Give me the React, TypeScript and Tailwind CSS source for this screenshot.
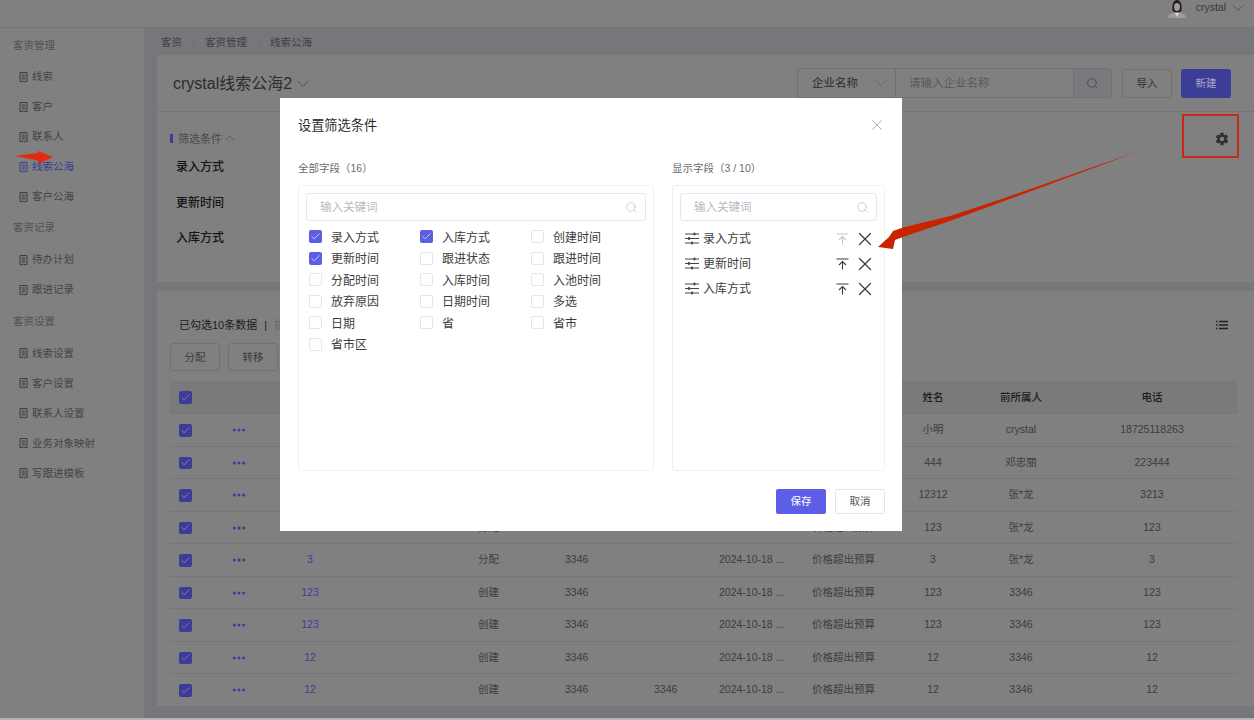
import React from "react";
import { ChevronDown, ChevronUp, ChevronRight, Search, X, Check, Ellipsis } from "lucide-react";
import { IoSettingsSharp } from "react-icons/io5";

const Doc = ({ c = "#3d3d3d" }: { c?: string }) => (
  <svg width="9" height="11" viewBox="0 0 9 11" fill="none" stroke={c} strokeWidth="1" className="shrink-0">
    <path d="M1 .5h7v9.2l-1-.6-1 .9-1.500-.9-1.500.9-1-.9-1 .6z" />
    <path d="M2.600 3h3.800M2.600 5h3.800M2.600 7h3.800" />
  </svg>
);

const Nav = ({ t, active }: { t: string; active?: boolean }) => (
  <div className={`h-[30px] flex items-center pl-[19px] gap-[4px] text-[10.5px] ${active ? "text-[#3c3c9a]" : "text-[#444444]"}`}>
    <Doc c={active ? "#3c3c9a" : "#3d3d3d"} />
    <span>{t}</span>
  </div>
);

const Group = ({ t, className = "" }: { t: string; className?: string }) => (
  <div className={`h-[30px] flex items-center pl-[13px] text-[10.5px] text-[#505050] ${className}`}>{t}</div>
);

const DarkCheck = () => (
  <span className="w-[12.5px] h-[12.5px] rounded-[2px] bg-[#3c3c96] flex items-center justify-center">
    <Check size={11} strokeWidth={1.3} className="text-[#a9a9b8]" />
  </span>
);

const rows = [
  ["", "", "", "", "小明", "crystal", "18725118263"],
  ["", "", "", "", "444", "邓忠丽", "223444"],
  ["", "", "", "", "12312", "张*龙", "3213"],
  ["123", "分配", "3346", "", "123", "张*龙", "123"],
  ["3", "分配", "3346", "", "3", "张*龙", "3"],
  ["123", "创建", "3346", "", "123", "3346", "123"],
  ["123", "创建", "3346", "", "123", "3346", "123"],
  ["12", "创建", "3346", "", "12", "3346", "12"],
  ["12", "创建", "3346", "3346", "12", "3346", "12"],
];

const cols = "grid grid-cols-[58px_22px_120px_108px_87px_89px_65px_93px_88px_66px_110px_152px_9px] items-center";

const ModalSearch = () => (
  <div className="h-[28px] rounded-[3px] border border-[#e6e8ee] flex items-center pl-[13px] pr-[7px] justify-between">
    <span className="text-[11.5px] text-[#b6bac4] mt-[2px]">输入关键词</span>
    <Search size={13} strokeWidth={1} className="text-[#a6aab2]" />
  </div>
);

const Box = ({ on, t }: { on?: boolean; t: string }) => (
  <div className="flex items-center h-[21.5px] gap-[9px]">
    {on ? (
      <span className="w-[13px] h-[13px] rounded-[2px] bg-[#5c5fe6] flex items-center justify-center">
        <Check size={11} strokeWidth={1.4} className="text-white" />
      </span>
    ) : (
      <span className="w-[13px] h-[13px] rounded-[2px] border border-[#e4e6ec] bg-white" />
    )}
    <span className="text-[12px] text-[#3d3d3d] mt-[2px]">{t}</span>
  </div>
);

const Up = ({ c }: { c: string }) => (
  <svg width="13" height="12" viewBox="0 0 13 12" fill="none" stroke={c} strokeWidth="1.1">
    <path d="M.5 1h12M6.500 11.500V3.500M3 7l3.500-3.500L10 7" />
  </svg>
);

const Knobs = () => (
  <svg width="14" height="13" viewBox="0 0 14 13" fill="#444444" stroke="#444444" strokeWidth="1">
    <path d="M0 2h14M0 6.500h14M0 11h14" />
    <rect x="8.500" y="0.700" width="2" height="2.600" stroke="none" />
    <rect x="3" y="5.200" width="2" height="2.600" stroke="none" />
    <rect x="6" y="9.700" width="2" height="2.600" stroke="none" />
  </svg>
);

const Field = ({ t, first }: { t: string; first?: boolean }) => (
  <div className="h-[25px] flex items-center pl-[12px] pr-[8px]">
    <Knobs />
    <span className="ml-[4px] text-[12px] text-[#3d3d3d] flex-1">{t}</span>
    <Up c={first ? "#c4c6ca" : "#3d3d3d"} />
    <X size={22} strokeWidth={1.4} className="ml-[5px] text-[#3d3d3d]" />
  </div>
);

const FilterRow = ({ t }: { t: string }) => (
  <div className="h-[35.5px] flex items-center pl-[19px] pt-[1px] text-[12px] font-medium text-[#141414]">{t}</div>
);

const GhostBtn = ({ t }: { t: string }) => (
  <div className="w-[50px] h-[28px] pt-[1px] rounded-[3px] border border-[#717171] flex items-center justify-center text-[10.5px] text-[#3a3a3a]">{t}</div>
);

const allFields = [
  ["录入方式", "入库方式", "创建时间"],
  ["更新时间", "跟进状态", "跟进时间"],
  ["分配时间", "入库时间", "入池时间"],
  ["放弃原因", "日期时间", "多选"],
  ["日期", "省", "省市"],
  ["省市区", "", ""],
];
const checked = ["录入方式", "入库方式", "更新时间"];

export default function App() {
  return (
    <div
      className="relative w-[1254px] h-[720px] overflow-hidden bg-[#808080] flex flex-col"
      style={{ fontFamily: '"Liberation Sans","Noto Sans CJK SC",sans-serif' }}
    >
      <header className="h-[28px] shrink-0 border-b border-[#767676] flex items-start justify-end">
        <div className="flex items-center h-[18px] pr-[6px]">
          <svg width="20" height="18" viewBox="0 0 20 18" className="mr-[9px]">
            <path d="M1 18c0-4 3-5 9-5s9 1 9 5z" fill="#9c9c9c" />
            <path d="M8 13h4l-2 4z" fill="#d8d8d8" />
            <path d="M5.500 11C5 5 6 0 10 0s5 5 4.500 11l-2 1H7.500z" fill="#1d1d1d" />
            <ellipse cx="10" cy="7" rx="3" ry="4" fill="#a8988f" />
          </svg>
          <span className="text-[10.5px] text-[#3a3a3a] mb-[2px]">crystal</span>
          <ChevronDown size={20} strokeWidth={0.8} className="ml-[2px] mb-[2px] text-[#3a3a3a]" />
        </div>
      </header>

      <div className="h-[690px] shrink-0 flex">
        <aside className="w-[144px] shrink-0 pt-[3px]">
          <Group t="客资管理" />
          <div className="mt-[1px]">
            <Nav t="线索" />
            <Nav t="客户" />
            <Nav t="联系人" />
            <Nav t="线索公海" active />
            <Nav t="客户公海" />
          </div>
          <Group t="客资记录" className="mt-[1px]" />
          <div className="mt-[2px]">
            <Nav t="待办计划" />
            <Nav t="跟进记录" />
          </div>
          <Group t="客资设置" className="mt-[2px]" />
          <div className="mt-[1.5px]">
            <Nav t="线索设置" />
            <Nav t="客户设置" />
            <Nav t="联系人设置" />
            <Nav t="业务对象映射" />
            <Nav t="写跟进模板" />
          </div>
        </aside>

        <main className="flex-1 bg-[#76777a] flex flex-col min-w-0 pl-[13px]">
          <div className="h-[27px] shrink-0 flex items-center pl-[4px] pt-[2px] gap-[1.5px] text-[10.5px] text-[#404040]">
            <span>客资</span>
            <ChevronRight size={20} strokeWidth={0.7} className="text-[#626262]" />
            <span>客资管理</span>
            <ChevronRight size={20} strokeWidth={0.7} className="text-[#626262]" />
            <span>线索公海</span>
          </div>

          <section className="h-[227px] shrink-0 bg-[#808080] flex flex-col">
            <div className="h-[57px] shrink-0 border-b border-[#767676] flex items-center pl-[16px] pr-[23px]">
              <span className="text-[16px] text-[#2c2c2c] pt-[2px]">crystal线索公海2</span>
              <ChevronDown size={20} strokeWidth={0.9} className="ml-[1px] mt-[2px] text-[#3a3a3a]" />
              <div className="ml-auto flex items-center h-[30px] w-[315px] rounded-[3px] border border-[#717171] text-[11.5px]">
                <div className="w-[98px] h-full flex items-center justify-between pl-[14px] pr-[4px] border-r border-[#717171] font-medium text-[#3a3a3a]">
                  <span className="pt-[2px]">企业名称</span>
                  <ChevronDown size={20} strokeWidth={0.7} className="text-[#5d5d5d]" />
                </div>
                <div className="flex-1 h-full flex items-center pl-[13px] pt-[2px] text-[#585858]">请输入企业名称</div>
                <div className="w-[38px] h-full bg-[#787a7e] border-l border-[#717171] rounded-r-[3px] flex items-center justify-center">
                  <Search size={13} strokeWidth={1} className="text-[#333333]" />
                </div>
              </div>
              <div className="ml-[10px] w-[50px] h-[29px] pt-[2px] rounded-[3px] border border-[#717171] flex items-center justify-center text-[10.5px] text-[#333333]">导入</div>
              <div className="ml-[9px] w-[50px] h-[29px] pt-[2px] rounded-[3px] bg-[#3c3d96] flex items-center justify-center text-[10.5px] text-[#a8a8c8]">新建</div>
            </div>
            <div className="flex-1 flex justify-between pr-[25px] pt-[21px]">
              <div>
                <div className="flex items-center h-[10px] pl-[13px] text-[11px] text-[#4a4a4a]">
                  <span className="w-[3px] h-[9px] bg-[#3c3d96]" />
                  <span className="ml-[5px] mt-[2px]">筛选条件</span>
                  <ChevronUp size={16} strokeWidth={0.9} />
                </div>
                <div className="mt-[6px]">
                  <FilterRow t="录入方式" />
                  <FilterRow t="更新时间" />
                  <FilterRow t="入库方式" />
                </div>
              </div>
              <IoSettingsSharp size={14} className="text-[#303030] -mt-[1px]" />
            </div>
          </section>

          <section className="mt-[9px] h-[415px] shrink-0 bg-[#808080] flex flex-col pl-[13px]">
            <div className="h-[52px] shrink-0 flex items-center pl-[9px] pr-[26px] pt-[16px] text-[11px]">
              <span className="text-[#1c1c1c]">已勾选10条数据</span>
              <span className="ml-[7px] text-[#1c1c1c]">|</span>
              <span className="ml-[7px] text-[#686868]">提</span>
              <svg width="12" height="10" viewBox="0 0 12 10" className="ml-auto" stroke="#222222" strokeWidth="1.500">
                <path d="M0 1.500h1.500M3 1.500h9M0 5h1.500M3 5h9M0 8.500h1.500M3 8.500h9" />
              </svg>
            </div>
            <div className="flex gap-[8px] shrink-0">
              <GhostBtn t="分配" />
              <GhostBtn t="转移" />
            </div>
            <div className="mt-[10px] w-[1067px]">
              <div className={`${cols} h-[33px] pt-[1px] bg-[#7a7a7a] border-b border-[#777777] text-[10.5px] font-medium text-[#1e1e1e]`}>
                <div className="pl-[9px]"><DarkCheck /></div>
                <div />
                <div />
                <div />
                <div />
                <div />
                <div />
                <div />
                <div />
                <div className="text-center">姓名</div>
                <div className="text-center">前所属人</div>
                <div className="text-center">电话</div>
              </div>
              {rows.map((r, i) => (
                <div key={i} className={`${cols} h-[32.5px] pt-[1px] border-b border-[#777777] text-[10.5px] text-[#3c3c3c]`}>
                  <div className="pl-[9px]"><DarkCheck /></div>
                  <div className="flex justify-center text-[#3c3c9a]"><Ellipsis size={16} strokeWidth={2.5} /></div>
                  <div className="text-center text-[#3c3c9a]">{r[0]}</div>
                  <div />
                  <div>{r[1]}</div>
                  <div>{r[2]}</div>
                  <div>{r[3]}</div>
                  <div className="whitespace-nowrap">{i > 2 ? "2024-10-18 ..." : ""}</div>
                  <div className="whitespace-nowrap">{i > 2 ? "价格超出预算" : ""}</div>
                  <div className="text-center">{r[4]}</div>
                  <div className="text-center">{r[5]}</div>
                  <div className="text-center">{r[6]}</div>
                </div>
              ))}
            </div>
          </section>
        </main>
      </div>
      <div className="h-[2px] shrink-0 bg-[#b4b4b4]" />

      {/* dialog over the page */}
      <div className="absolute left-[280px] top-[98px] w-[622px] h-[433px] bg-white flex flex-col pl-[18px] pr-[17px]">
        <div className="h-[54px] shrink-0 flex items-center justify-between">
          <span className="text-[13.2px] text-[#2a2a2a] pt-[2px]">设置筛选条件</span>
          <X size={18} strokeWidth={0.9} className="text-[#8c8c8c] -mr-[1px]" />
        </div>
        <div className="flex gap-[18px] h-[319px] shrink-0">
          <div className="w-[356px] flex flex-col">
            <div className="h-[33px] shrink-0 flex items-center text-[10.5px] text-[#6a6a6a]">全部字段（16）</div>
            <div className="flex-1 border border-[#eff0f3] rounded-[3px] pt-[7px] px-[7px]">
              <ModalSearch />
              <div className="mt-[5px]">
                {allFields.map((row, i) => (
                  <div key={i} className="grid grid-cols-[111px_111px_111px] pl-[3px]">
                    {row.map((t, j) => (t ? <Box key={j} t={t} on={i < 2 && checked.includes(t)} /> : <div key={j} />))}
                  </div>
                ))}
              </div>
            </div>
          </div>
          <div className="w-[213px] flex flex-col">
            <div className="h-[33px] shrink-0 flex items-center text-[10.5px] text-[#6a6a6a]">显示字段（3 / 10）</div>
            <div className="flex-1 border border-[#eff0f3] rounded-[3px] pt-[7px]">
              <div className="px-[7px]"><ModalSearch /></div>
              <div className="mt-[5px]">
                <Field t="录入方式" first />
                <Field t="更新时间" />
                <Field t="入库方式" />
              </div>
            </div>
          </div>
        </div>
        <div className="flex justify-end gap-[9px] mt-[18px]">
          <div className="w-[50px] h-[25px] pt-[1px] rounded-[2px] bg-[#5c5fe6] flex items-center justify-center text-[10.5px] text-white">保存</div>
          <div className="w-[50px] h-[25px] pt-[1px] rounded-[2px] border border-[#e4e6ec] flex items-center justify-center text-[10.5px] text-[#555555]">取消</div>
        </div>
      </div>

      {/* red annotations drawn on the screenshot */}
      <div className="absolute left-[1182px] top-[114px] w-[57px] h-[44px] border-2 border-[#c92a18]" />
      <svg className="absolute left-0 top-0 pointer-events-none" width="1254" height="720" viewBox="0 0 1254 720">
        <defs>
          <linearGradient id="fade" x1="1153" y1="146" x2="1100" y2="165" gradientUnits="userSpaceOnUse">
            <stop offset="0" stopColor="#c92a10" stopOpacity="0.1" />
            <stop offset="1" stopColor="#c82400" />
          </linearGradient>
        </defs>
        <polygon points="1153,146 1003,198.500 950,216 903,227.500 893,231 889,237 878,247 893,249 895,240 903,237 950,221 1003,201.500" fill="url(#fade)" />
        <polygon points="15,156 38,153 38,151 53,157 38,164 38,160.500" fill="#e22a10" />
      </svg>
    </div>
  );
}
